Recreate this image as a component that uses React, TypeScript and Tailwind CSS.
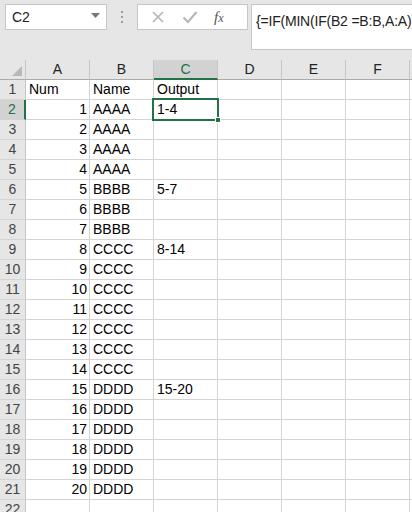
import React from 'react';

const COLS = ['A', 'B', 'C', 'D', 'E', 'F', 'G'];

// 表データ: [A, B, C]
const ROWS: [string, string, string][] = [
  ['Num', 'Name', 'Output'],
  ['1', 'AAAA', '1-4'],
  ['2', 'AAAA', ''],
  ['3', 'AAAA', ''],
  ['4', 'AAAA', ''],
  ['5', 'BBBB', '5-7'],
  ['6', 'BBBB', ''],
  ['7', 'BBBB', ''],
  ['8', 'CCCC', '8-14'],
  ['9', 'CCCC', ''],
  ['10', 'CCCC', ''],
  ['11', 'CCCC', ''],
  ['12', 'CCCC', ''],
  ['13', 'CCCC', ''],
  ['14', 'CCCC', ''],
  ['15', 'DDDD', '15-20'],
  ['16', 'DDDD', ''],
  ['17', 'DDDD', ''],
  ['18', 'DDDD', ''],
  ['19', 'DDDD', ''],
  ['20', 'DDDD', ''],
  ['', '', ''],
];

const font = { fontFamily: '"Liberation Sans", Arial, sans-serif' };

export default function App() {
  return (
    <div className="w-[412px] h-[512px] overflow-hidden bg-[#e6e6e6] relative" style={font}>
      {/* 数式バー */}
      <div className="flex h-[60px] pt-[4px]">
        <div className="ml-[5px] shrink-0 w-[102px] h-[26px] bg-white border border-[#c6c6c6] flex items-center justify-between pl-[6px] pr-[6px]">
          <span className="text-[14px] text-[#222]">C2</span>
          <svg width="9" height="5" viewBox="0 0 9 5" className="mt-[-3px]">
            <path d="M0 0h9L4.5 5z" fill="#777" />
          </svg>
        </div>
        <div className="w-[30px] shrink-0 flex flex-col items-center justify-center h-[26px] gap-[3px]">
          <span className="w-[2px] h-[2px] bg-[#9a9a9a]" />
          <span className="w-[2px] h-[2px] bg-[#9a9a9a]" />
          <span className="w-[2px] h-[2px] bg-[#9a9a9a]" />
        </div>
        <div className="w-[111px] shrink-0 h-[26px] bg-white border border-[#c6c6c6] flex items-center">
          <svg width="14" height="14" viewBox="0 0 14 14" className="ml-[13px]">
            <path d="M2 2l10 10M12 2L2 12" stroke="#b4b4b4" strokeWidth="1.6" />
          </svg>
          <svg width="16" height="14" viewBox="0 0 16 14" className="ml-[17px]">
            <path d="M1.5 7.5l4.5 4.5L14.5 2" stroke="#b4b4b4" strokeWidth="2" fill="none" />
          </svg>
          <span className="ml-[16px] text-[15px] italic text-[#555]" style={{ fontFamily: '"Liberation Serif", serif' }}>
            f<span className="text-[12px]">x</span>
          </span>
        </div>
        <div className="ml-[3px] flex-1 h-[46px] bg-white border border-[#c6c6c6] border-r-0 pl-[4px] pt-[4px] overflow-hidden whitespace-nowrap">
          <span className="text-[14px] text-[#222] tracking-[-0.2px]">{'{=IF(MIN(IF(B2 =B:B,A:A))=A2,MIN(IF(B2=B:B,A:A))&"-"&MAX(IF(B2=B:B,A:A)),"")}'}</span>
        </div>
      </div>

      {/* 列見出し */}
      <div className="flex h-[20px]">
        <div className="w-[26px] shrink-0 h-[20px] border-r border-[#c6c6c6] border-b border-b-[#ababab] relative">
          <svg width="10" height="10" viewBox="0 0 10 10" className="absolute right-[3px] bottom-[3px]">
            <path d="M10 0v10H0z" fill="#b8b8b8" />
          </svg>
        </div>
        {COLS.map((c) => (
          <div
            key={c}
            className={`w-[64px] shrink-0 h-[20px] border-r flex items-center justify-center text-[14px] ${
              c === 'C'
                ? 'bg-[#d2d2d2] border-[#c6c6c6] border-b-2 border-b-[#217346] text-[#217346]'
                : 'border-[#c6c6c6] border-b border-b-[#ababab] text-[#222]'
            }`}
          >
            {c}
          </div>
        ))}
      </div>

      {/* セル */}
      <div className="bg-white">
        {ROWS.map((r, i) => {
          const rowNum = i + 1;
          const sel = rowNum === 2;
          return (
            <div key={rowNum} className="flex h-[20px]">
              <div
                className={`w-[26px] shrink-0 h-[20px] border-b border-[#d4d4d4] flex items-center justify-center text-[14px] ${
                  sel
                    ? 'bg-[#d2d2d2] border-r-2 border-r-[#217346] text-[#217346]'
                    : 'bg-[#e6e6e6] border-r border-r-[#c6c6c6] text-[#444]'
                }`}
              >
                {rowNum}
              </div>
              {COLS.map((c, ci) => {
                const v = ci < 3 ? r[ci] : '';
                const right = ci === 0 && rowNum > 1;
                return (
                  <div
                    key={c}
                    className={`w-[64px] shrink-0 h-[20px] border-r border-b border-[#d4d4d4] flex items-center text-[14px] text-black whitespace-nowrap ${
                      right ? 'justify-end pr-[2px]' : 'pl-[3px]'
                    }`}
                  >
                    {v}
                  </div>
                );
              })}
            </div>
          );
        })}
      </div>

      {/* 選択セル C2 */}
      <div className="absolute left-[152px] top-[98px] w-[67px] h-[23px] border-2 border-[#217346] pointer-events-none" />
      <div className="absolute left-[215px] top-[117px] w-[6px] h-[6px] bg-[#217346] border border-white" />
    </div>
  );
}
